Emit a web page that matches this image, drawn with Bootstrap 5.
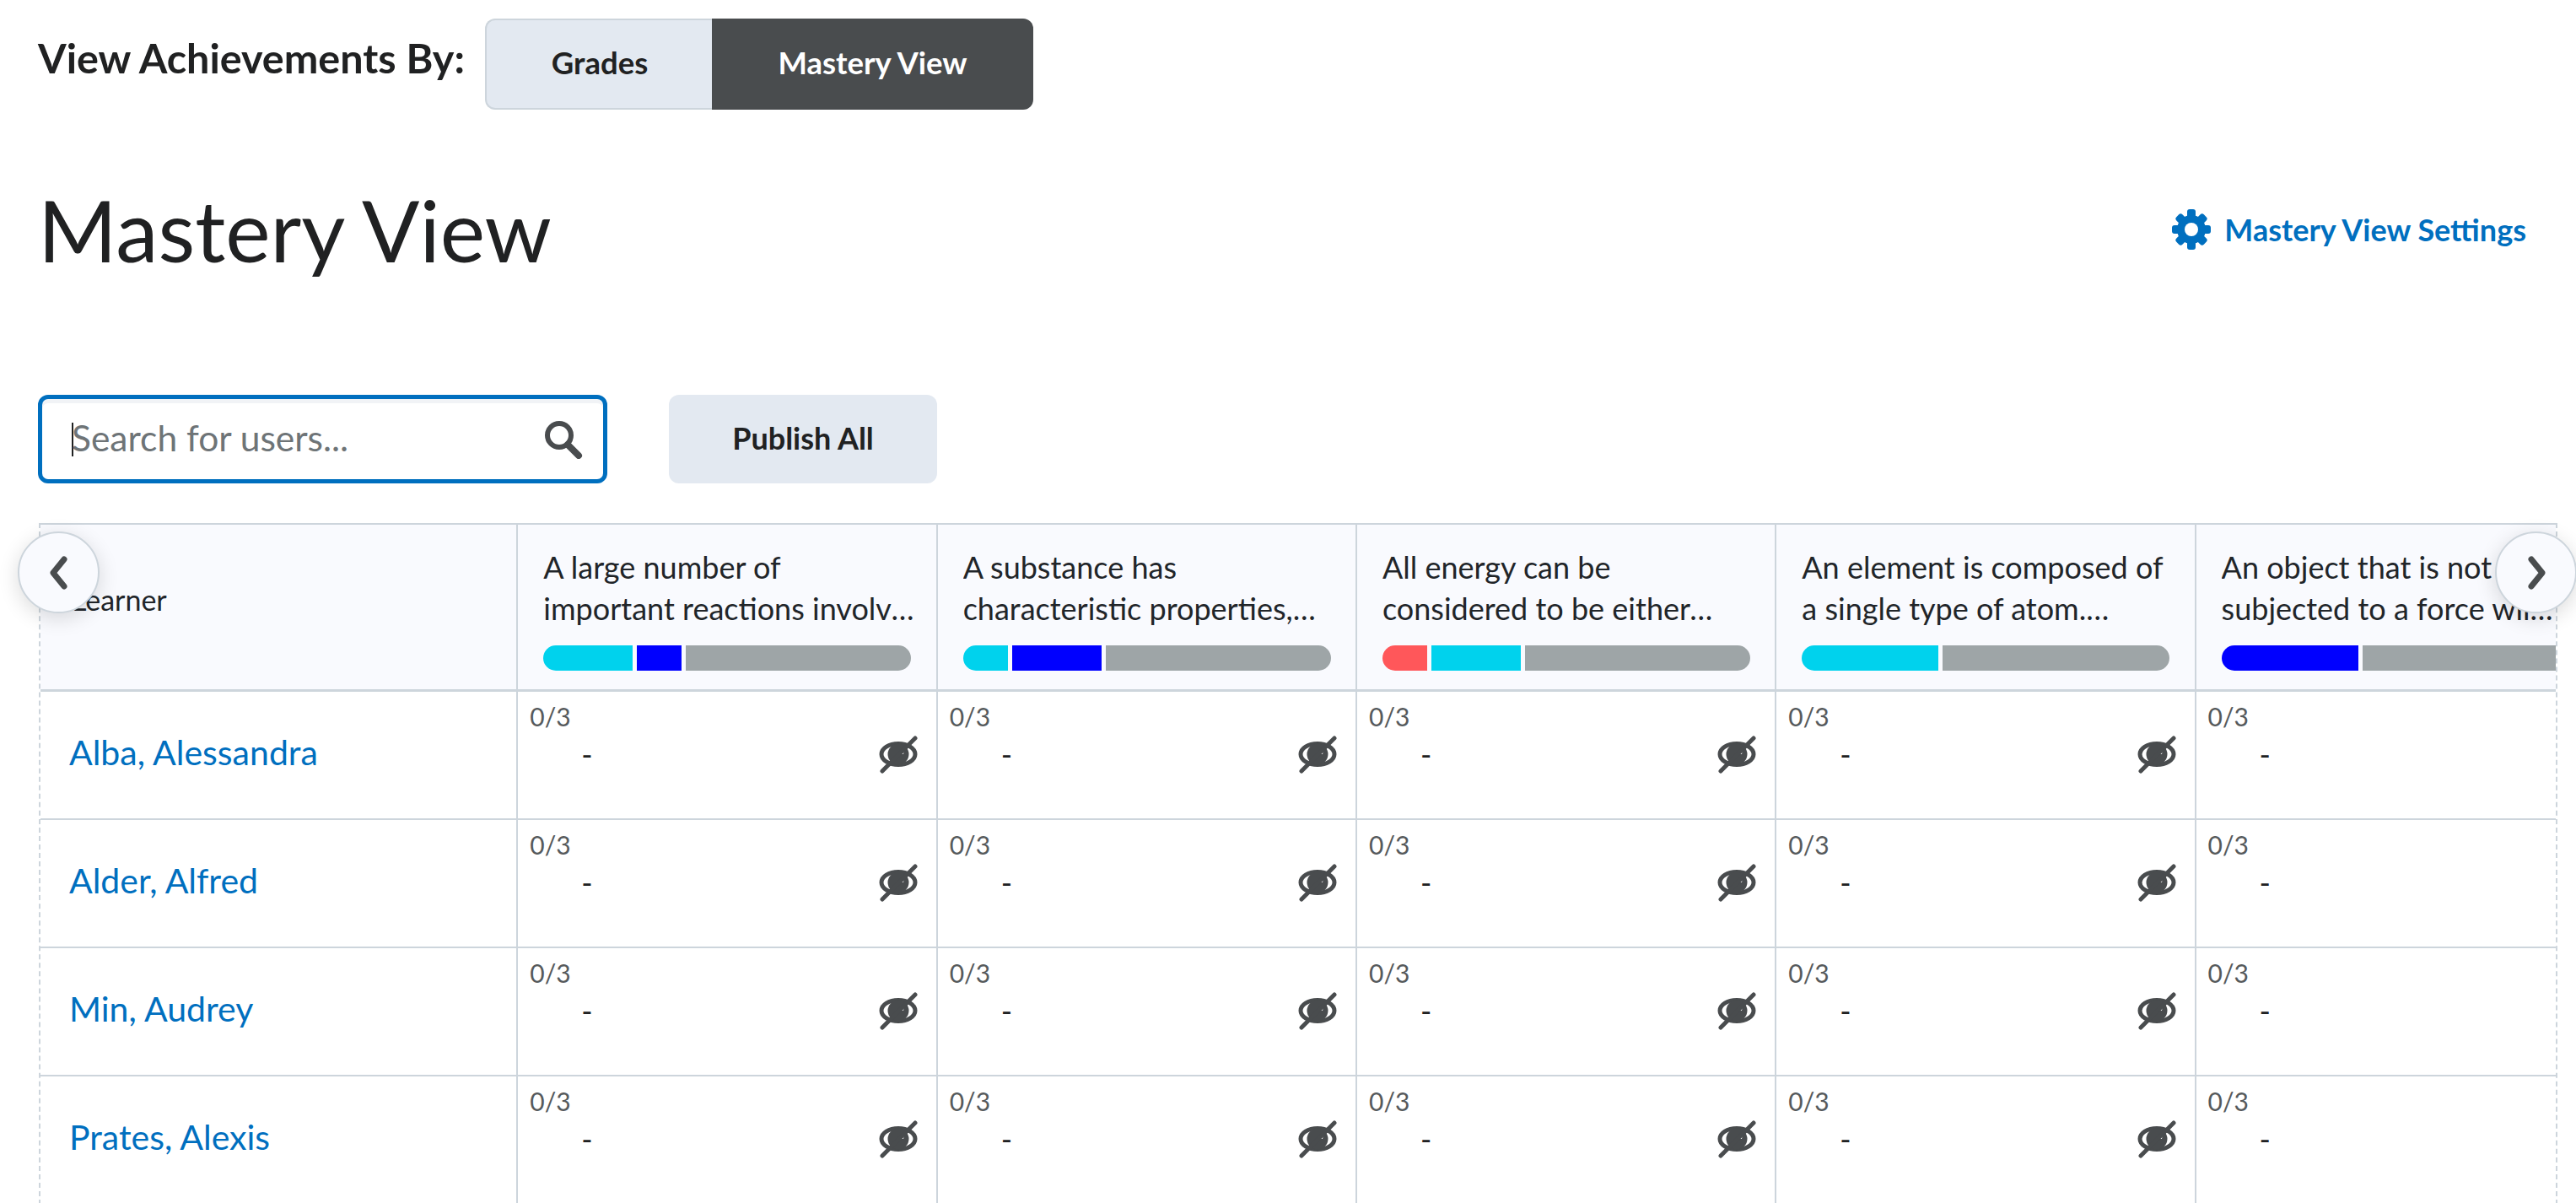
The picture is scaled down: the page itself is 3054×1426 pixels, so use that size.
<!DOCTYPE html>
<html lang="en">
<head>
  <meta charset="UTF-8">
  <title>Mastery View</title>
  <link href="https://cdn.jsdelivr.net/npm/bootstrap@5.3.3/dist/css/bootstrap.min.css" rel="stylesheet">
  <style>
    body { font-family: Lato, "Liberation Sans", sans-serif; color: #202122; overflow: hidden; background: #fff; }
    .page-wrap { padding: 22px 22px 0 45px; height: 1426px; overflow: hidden; }
    .view-label { font-size: 48.5px; font-weight: 700; width: 530px; line-height: 1; padding-bottom: 16px; white-space: nowrap; }
    .view-btn { font-size: 36.5px; font-weight: 700; height: 108px; border-radius: 12px; padding: 0 0 4px; }
    .view-btn.grades { width: 270px; background: #e3e9f1; color: #202122; border: 2px solid #cdd5dc; border-right: 0; }
    .view-btn.mastery { width: 381px; background: #494c4e; color: #fff; border: 0; }
    .page-title { font-size: 101px; font-weight: 400; line-height: 120px; margin: 0; }
    .title-row { margin-top: 82px; padding-right: 37px; }
    .settings-link { color: #006fbf; font-size: 36px; font-weight: 700; text-decoration: none; }
    .tools-row { margin-top: 136px; gap: 73px; }
    .search-box { width: 675px; height: 105px; border: 5px solid #006fbf; border-radius: 12px; padding: 0 24px 0 35px; box-shadow: inset 0 5px 0 #f1f3f6; }
    .search-box input { border: 0; outline: 0; padding: 0 0 3px; font-size: 42.5px; background: transparent; color: #202122; min-width: 0; margin-left: -2px; }
    .search-box input::placeholder { color: #6e7477; opacity: 1; }
    .fake-caret { width: 2px; height: 40px; background: #202122; flex: none; }
    .publish-btn { width: 318px; height: 105px; background: #e3e9f1; color: #202122; font-size: 36px; font-weight: 700; border: 0; border-radius: 12px; padding: 0 0 4px; }
    .grid-wrap { position: relative; width: 2986px; margin-top: 47px; margin-left: 1px; }
    .grid-clip { overflow: hidden; border-left: 2px dashed #cdd5dc; border-right: 2px dashed #cdd5dc; }
    .grid-table { table-layout: fixed; width: 3051px; margin: 0; border-collapse: separate; border-spacing: 0; --bs-table-bg: transparent; }
    .grid-table th, .grid-table td { padding: 0; border: 0; border-bottom: 2px solid #cdd5dc; }
    .grid-table thead th { background: #f9fafe; border-top: 2px solid #cdd5dc; height: 200px; font-weight: 400; vertical-align: top; border-bottom-width: 3px; }
    .grid-table .col-cell { border-left: 2px solid #cdd5dc; }
    .learner-head { font-size: 34px; vertical-align: middle !important; padding: 0 0 18px 37px !important; }
    .head-inner { padding: 26px 0 0 30px; }
    .head-text { font-size: 36px; line-height: 49px; height: 98px; width: 442px; display: -webkit-box; -webkit-line-clamp: 2; -webkit-box-orient: vertical; overflow: hidden; }
    .grid-table th:last-child .head-text { width: 398px; }
    .mastery-bar { height: 30px; margin-top: 19px; gap: 5px; width: 436px; border-radius: 15px; overflow: hidden; }
    .mastery-bar span { display: block; height: 100%; }
    .seg-cyan { background: #00d2ed; }
    .seg-blue { background: #0000ff; }
    .seg-red { background: #ff575a; }
    .seg-grey { background: #9ea5a7; flex: 1 1 auto; }
    .grid-table tbody td { height: 152px; vertical-align: top; }
    .learner-cell { vertical-align: middle !important; padding: 0 0 6px 34px !important; }
    .learner-cell a { color: #006fbf; font-size: 41px; text-decoration: none; }
    .score-cell { padding: 12px 22px 0 14px !important; }
    .score-num { font-size: 30px; line-height: 34px; color: #565a5c; }
    .score-line { margin-top: 5px; height: 46px; }
    .score-dash { margin-left: 61px; font-size: 36px; line-height: 1; color: #202122; }
    .scroll-btn { position: absolute; top: 10px; width: 97px; height: 97px; border-radius: 50%; background: #f9fafe; border: 2px solid #cdd5dc; padding: 0; box-shadow: 0 6px 24px rgba(0,0,0,.14); }
    .scroll-btn.go-left { left: -25px; }
    .scroll-btn.go-right { right: -23px; }
  </style>
</head>
<body>
  <div class="page-wrap">
    <div class="d-flex align-items-center">
      <div class="view-label">View Achievements By:</div>
      <div class="btn-group" role="group">
        <button type="button" class="btn view-btn grades">Grades</button>
        <button type="button" class="btn view-btn mastery">Mastery View</button>
      </div>
    </div>

    <div class="d-flex justify-content-between align-items-center title-row">
      <h1 class="page-title">Mastery View</h1>
      <a href="#" class="settings-link d-flex align-items-center gap-3">
        <svg width="46" height="48" viewBox="0 0 46 48" fill="#006fbf">
          <g>
            <rect x="18" y="0" width="10" height="48" rx="3"/>
            <rect x="18" y="1" width="10" height="46" rx="3" transform="rotate(45 23 24)"/>
            <rect x="18" y="1" width="10" height="46" rx="3" transform="rotate(90 23 24)"/>
            <rect x="18" y="1" width="10" height="46" rx="3" transform="rotate(135 23 24)"/>
          </g>
          <circle cx="23" cy="24" r="12.5" fill="none" stroke="#006fbf" stroke-width="9"/>
          <circle cx="23" cy="24" r="8" fill="#fff"/>
        </svg>
        Mastery View Settings
      </a>
    </div>

    <div class="d-flex align-items-center tools-row">
      <div class="search-box d-flex align-items-center">
        <span class="fake-caret"></span>
        <input type="text" class="flex-grow-1" placeholder="Search for users...">
        <svg width="46" height="46" viewBox="0 0 46 46" fill="none" stroke="#494c4e">
          <circle cx="18" cy="18" r="14" stroke-width="6"/>
          <path d="M28 29 L41 42" stroke-width="8" stroke-linecap="round"/>
        </svg>
      </div>
      <button type="button" class="btn publish-btn">Publish All</button>
    </div>

    <div class="grid-wrap">
      <div class="grid-clip">
        <table class="table grid-table">
          <colgroup id="cols"></colgroup>
          <thead><tr id="head-row"></tr></thead>
          <tbody id="body-rows"></tbody>
        </table>
      </div>
      <button type="button" class="scroll-btn go-left" aria-label="Scroll left">
        <svg width="26" height="40" viewBox="0 0 26 40" fill="none" stroke="#494c4e" stroke-width="7" stroke-linecap="round" stroke-linejoin="round"><path d="M19 4 L6 20 L19 36"/></svg>
      </button>
      <button type="button" class="scroll-btn go-right" aria-label="Scroll right">
        <svg width="26" height="40" viewBox="0 0 26 40" fill="none" stroke="#494c4e" stroke-width="7" stroke-linecap="round" stroke-linejoin="round"><path d="M7 4 L20 20 L7 36"/></svg>
      </button>
    </div>
  </div>

  <script>
    const standards = [
      { text: 'A large number of important reactions involve the transfer of electrons', bar: [['cyan', 106], ['blue', 53]] },
      { text: 'A substance has characteristic properties, which distinguish it from others', bar: [['cyan', 53], ['blue', 106]] },
      { text: 'All energy can be considered to be either kinetic or potential energy', bar: [['red', 53], ['cyan', 106]] },
      { text: 'An element is composed of a single type of atom. Substances are made of elements', bar: [['cyan', 162]] },
      { text: 'An object that is not subjected to a force will continue to move at constant speed', bar: [['blue', 162]] }
    ];
    const learners = ['Alba, Alessandra', 'Alder, Alfred', 'Min, Audrey', 'Prates, Alexis'];

    const eyeIcon = `<svg width="46" height="46" viewBox="0 0 46 46" fill="none">
      <ellipse cx="23" cy="23" rx="20" ry="12.5" stroke="#494c4e" stroke-width="5"/>
      <circle cx="23" cy="23" r="12.5" fill="#494c4e"/>
      <path d="M26 23 L30 18 L29 23 Z" fill="#fff"/>
      <path d="M4 43 L43 4" stroke="#494c4e" stroke-width="5" stroke-linecap="round"/>
    </svg>`;

    document.getElementById('cols').innerHTML =
      '<col style="width:564px">' + standards.map(() => '<col style="width:497px">').join('');

    document.getElementById('head-row').innerHTML =
      '<th class="learner-head">Learner</th>' + standards.map(s => `
        <th class="col-cell">
          <div class="head-inner">
            <div class="head-text">${s.text}</div>
            <div class="mastery-bar d-flex">
              ${s.bar.map(b => `<span class="seg-${b[0]}" style="width:${b[1]}px"></span>`).join('')}
              <span class="seg-grey"></span>
            </div>
          </div>
        </th>`).join('');

    document.getElementById('body-rows').innerHTML = learners.map(name => `
      <tr>
        <td class="learner-cell"><a href="#">${name}</a></td>
        ${standards.map(() => `
          <td class="col-cell score-cell">
            <div class="score-num">0/3</div>
            <div class="d-flex justify-content-between align-items-center score-line">
              <span class="score-dash">-</span>
              ${eyeIcon}
            </div>
          </td>`).join('')}
      </tr>`).join('');
  </script>
</body>
</html>
